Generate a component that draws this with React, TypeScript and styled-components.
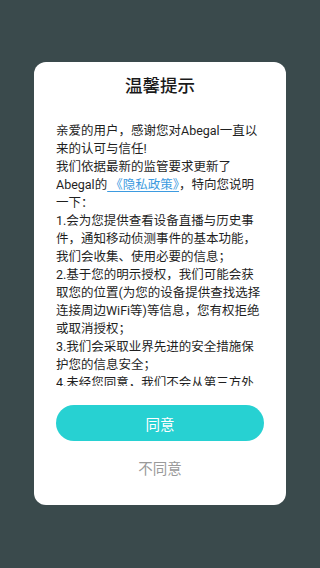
import React from "react";
import styled, { createGlobalStyle } from "styled-components";

const Global = createGlobalStyle`
  html, body { margin: 0; padding: 0; }
  body {
    background: #3a4a4c;
    font-family: Roboto, "Noto Sans CJK SC", "Noto Sans", sans-serif;
  }
`;

const Page = styled.div`
  width: 320px;
  height: 568px;
  display: flex;
  justify-content: center;
  align-items: flex-start;
  padding-top: 62px;
  box-sizing: border-box;
  background: #3a4a4c;
`;

const Card = styled.div`
  width: 252px;
  height: 443px;
  background: #ffffff;
  border-radius: 12px;
  box-sizing: border-box;
  padding: 12px 22px 0;
  display: flex;
  flex-direction: column;
  align-items: stretch;
`;

const Title = styled.h1`
  margin: 0;
  font-size: 17.5px;
  line-height: 24px;
  font-weight: 500;
  color: #1a1a1a;
  text-align: center;
`;

const Body = styled.div`
  margin-top: 24px;
  height: 264px;
  overflow: hidden;
  font-size: 12.5px;
  line-height: 18px;
  color: #1f1f1f;
`;

const Link = styled.a`
  color: #3d9be0;
  text-decoration: underline;
  text-underline-offset: 2px;
`;

const AgreeButton = styled.button`
  margin-top: 19px;
  height: 36px;
  border: none;
  border-radius: 18px;
  background: #27d1d2;
  color: #ffffff;
  font-family: inherit;
  font-size: 14.5px;
  padding: 0;
`;

const Decline = styled.button`
  margin-top: 19px;
  height: 20px;
  border: none;
  background: none;
  padding: 0;
  color: #9a9a9a;
  font-family: inherit;
  font-size: 14.5px;
  line-height: 20px;
`;

export default function App() {
  return (
    <>
      <Global />
      <Page>
        <Card>
          <Title>温馨提示</Title>
          <Body>
            亲爱的用户，感谢您对Abegal一直以来的认可与信任!
            <br />
            我们依据最新的监管要求更新了Abegal的<Link>&nbsp;《隐私政策》</Link>，特向您说明一下：
            <br />
            1.会为您提供查看设备直播与历史事件，通知移动侦测事件的基本功能，我们会收集、使用必要的信息；
            <br />
            2.基于您的明示授权，我们可能会获取您的位置(为您的设备提供查找选择连接周边WiFi等)等信息，您有权拒绝或取消授权；
            <br />
            3.我们会采取业界先进的安全措施保护您的信息安全；
            <br />
            4.未经您同意，我们不会从第三方外部获取、共享或对外提供您的信息；
          </Body>
          <AgreeButton>同意</AgreeButton>
          <Decline>不同意</Decline>
        </Card>
      </Page>
    </>
  );
}
